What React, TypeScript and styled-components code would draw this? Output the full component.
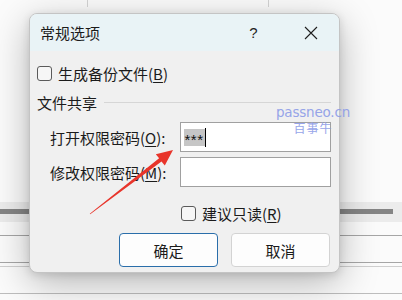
import React from 'react';
import styled, { createGlobalStyle } from 'styled-components';

const GlobalStyle = createGlobalStyle`
  html, body {
    margin: 0;
    padding: 0;
    background: #fbfbfb;
  }
  body {
    font-family: 'Segoe UI', 'Noto Sans CJK SC', 'Noto Sans', sans-serif;
  }
`;

const Screen = styled.div`
  position: relative;
  width: 402px;
  height: 300px;
  overflow: hidden;
  background: #fbfbfb;
`;

/* the document that sits behind the dialog */
const Backdrop = styled.div`
  display: flex;
  flex-direction: column;
  height: 100%;
`;

const TopStrip = styled.div`
  display: flex;
  height: 7px;
  padding-left: 87px;
`;

const TopCell = styled.div<{ w: number }>`
  width: ${(p) => p.w}px;
  border-left: 1px solid #d4d4d4;
`;

const Gap = styled.div<{ h: number }>`
  height: ${(p) => p.h}px;
  flex-shrink: 0;
`;

const Band = styled.div`
  height: 20px;
  background: #ececec;
  padding: 7px 9px 0 0;
  box-sizing: border-box;
`;

const BandBar = styled.div`
  height: 5px;
  background: #858585;
`;

const Rule = styled.div<{ tone: string }>`
  height: 1px;
  background: ${(p) => p.tone};
  flex-shrink: 0;
`;

/* dialog */
const Dialog = styled.div`
  position: absolute;
  left: 29px;
  top: 13px;
  width: 311px;
  height: 260px;
  box-sizing: border-box;
  border: 1px solid #c4c4c4;
  border-radius: 8px;
  background: #f0f0f0;
  overflow: hidden;
  box-shadow: 0 10px 38px rgba(0, 0, 0, 0.28), 0 2px 8px rgba(0, 0, 0, 0.12);
  color: #1b1b1b;
  font-family: 'Noto Sans CJK SC', 'Noto Sans', sans-serif;
  font-size: 15px;
`;

const TitleBar = styled.div`
  display: flex;
  align-items: center;
  height: 37px;
  padding: 0 0 0 10px;
  background: #e9f3f6;
`;

const Title = styled.div`
  flex: 1;
  line-height: 20px;
`;

const TitleButton = styled.div`
  width: 57px;
  height: 37px;
  display: flex;
  align-items: center;
  justify-content: center;
  font-family: 'Liberation Sans', sans-serif;
  font-size: 15px;
  color: #222;
`;

const Body = styled.div`
  display: flex;
  flex-direction: column;
  padding: 0 8px 0 7px;
`;

const CheckRow = styled.label<{ indent?: number; top: number }>`
  display: flex;
  align-items: center;
  gap: 6px;
  height: 19px;
  margin-top: ${(p) => p.top}px;
  padding-left: ${(p) => p.indent ?? 0}px;
  line-height: 19px;
`;

const Box = styled.span`
  width: 15px;
  height: 15px;
  box-sizing: border-box;
  border: 1px solid #5a5a5a;
  border-radius: 3px;
  background: #f6f6f6;
  flex-shrink: 0;
`;

const Key = styled.span`
  text-decoration: underline;
  text-underline-offset: 2px;
`;

const GroupHead = styled.div`
  display: flex;
  align-items: center;
  height: 19px;
  margin-top: 10px;
  line-height: 19px;
`;

const GroupLine = styled.div`
  flex: 1;
  height: 1px;
  margin-left: 7px;
  background: #d6d6d6;
`;

const FieldRow = styled.div<{ top: number }>`
  display: flex;
  align-items: center;
  height: 30px;
  margin-top: ${(p) => p.top}px;
  padding-left: 13px;
`;

const FieldLabel = styled.div`
  width: 130px;
  line-height: 19px;
  white-space: nowrap;
`;

const Input = styled.div`
  width: 152px;
  height: 30px;
  box-sizing: border-box;
  border: 1px solid #a0a0a0;
  background: #fff;
  display: flex;
  align-items: center;
  padding-left: 3px;
`;

const Selected = styled.span`
  display: inline-block;
  height: 17px;
  padding: 0 1px;
  background: #c6c6c6;
  font-family: 'Liberation Sans', sans-serif;
  font-size: 15px;
  line-height: 22px;
  letter-spacing: 0.5px;
  color: #111;
`;

const Caret = styled.span`
  width: 1px;
  height: 19px;
  background: #000;
`;

const Buttons = styled.div`
  display: flex;
  justify-content: flex-end;
  gap: 13px;
  margin-top: 10px;
  padding-right: 1px;
`;

const Button = styled.div<{ primary?: boolean }>`
  width: 99px;
  height: 34px;
  box-sizing: border-box;
  display: flex;
  align-items: center;
  justify-content: center;
  border-radius: 4px;
  background: #fdfdfd;
  border: 1px solid ${(p) => (p.primary ? '#2a6eaa' : '#d3d3d3')};
  font-size: 15px;
`;

const Watermark = styled.div`
  position: absolute;
  left: 283px;
  top: 104px;
  width: 60px;
  display: flex;
  flex-direction: column;
  align-items: center;
  color: #8d9ce8;
  opacity: 0.9;
  pointer-events: none;
`;

const MarkUrl = styled.span`
  font-family: 'DejaVu Sans', sans-serif;
  font-size: 13.5px;
  line-height: 17px;
  letter-spacing: -0.2px;
`;

const MarkName = styled.span`
  font-family: 'Noto Sans CJK SC', sans-serif;
  font-size: 12px;
  line-height: 13px;
  letter-spacing: 1px;
`;

const Arrow = styled.svg`
  position: absolute;
  left: 0;
  top: 0;
  pointer-events: none;
`;

export default function App() {
  return (
    <Screen>
      <GlobalStyle />
      <Backdrop>
        <TopStrip>
          <TopCell w={180} />
          <TopCell w={40} />
        </TopStrip>
        <Gap h={195} />
        <Band>
          <BandBar />
        </Band>
        <Gap h={13} />
        <Rule tone="#a6a6a6" />
        <Gap h={26} />
        <Rule tone="#a6a6a6" />
        <Gap h={3} />
        <Rule tone="#cfcfcf" />
        <Gap h={26} />
        <Rule tone="#bdbdbd" />
      </Backdrop>

      <Dialog>
        <TitleBar>
          <Title>常规选项</Title>
          <TitleButton>?</TitleButton>
          <TitleButton>
            <svg width="14" height="14" viewBox="0 0 14 14">
              <path d="M1 1L13 13M13 1L1 13" stroke="#1f1f1f" strokeWidth="1.1" fill="none" />
            </svg>
          </TitleButton>
        </TitleBar>
        <Body>
          <CheckRow top={13}>
            <Box />
            <span>
              生成备份文件(<Key>B</Key>)
            </span>
          </CheckRow>
          <GroupHead>
            文件共享
            <GroupLine />
          </GroupHead>
          <FieldRow top={10}>
            <FieldLabel>
              打开权限密码(<Key>O</Key>):
            </FieldLabel>
            <Input>
              <Selected>***</Selected>
              <Caret />
            </Input>
          </FieldRow>
          <FieldRow top={5}>
            <FieldLabel>
              修改权限密码(<Key>M</Key>):
            </FieldLabel>
            <Input />
          </FieldRow>
          <CheckRow top={17} indent={144}>
            <Box />
            <span>
              建议只读(<Key>R</Key>)
            </span>
          </CheckRow>
          <Buttons>
            <Button primary>确定</Button>
            <Button>取消</Button>
          </Buttons>
        </Body>
      </Dialog>

      <Watermark>
        <MarkUrl>passneo.cn</MarkUrl>
        <MarkName>百事牛</MarkName>
      </Watermark>

      <Arrow width="402" height="300" viewBox="0 0 402 300">
        <polygon
          points="89.8,213.7 90.2,214.3 161.5,161.4 164.8,165.5 173,150 155.8,154.2 159.1,158.2"
          fill="#e8352b"
        />
      </Arrow>
    </Screen>
  );
}
